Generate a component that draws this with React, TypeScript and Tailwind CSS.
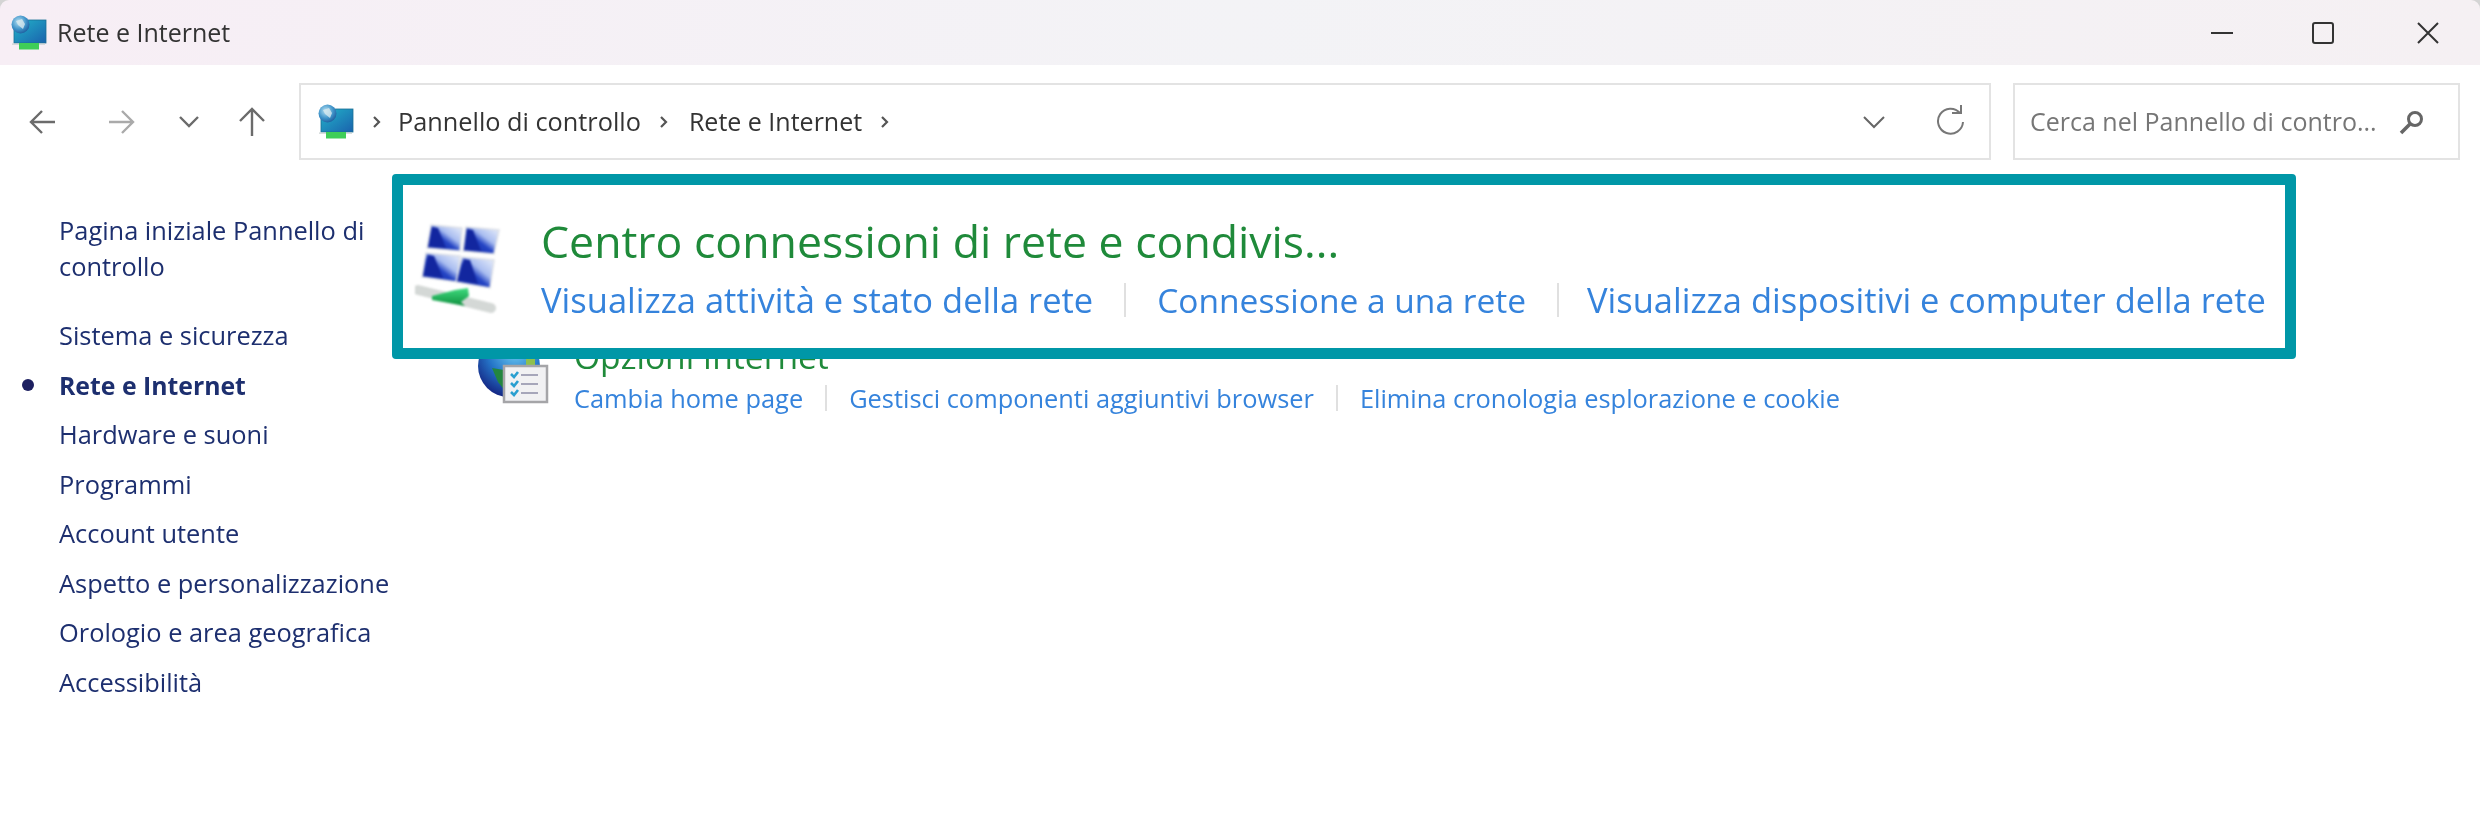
import React from "react";

const sideItems = [
    "Sistema e sicurezza",
    "Rete e Internet",
    "Hardware e suoni",
    "Programmi",
    "Account utente",
    "Aspetto e personalizzazione",
    "Orologio e area geografica",
    "Accessibilità",
];

const panes = [
    { frame: "M16 3L47 6L45 29L12 26Z", wedge: "M17 5L23 6L31 26L14 24Z" },
    { frame: "M51 5L84 8L79 32L48 29Z", wedge: "M52 7L58 8L66 29L50 27Z" },
    { frame: "M11 31L45 34L42 60L7 55Z", wedge: "M13 33L19 34L28 56L9 53Z" },
    { frame: "M47 35L79 38L75 66L41 60Z", wedge: "M49 37L55 38L63 62L43 58Z" },
];

const NetIcon: React.FC<{ id: string }> = ({ id }) => (
    <svg width="36" height="36" viewBox="0 0 36 36" className="shrink-0 blur-[0.4px]">
        <defs>
            <linearGradient id={`${id}-s`} x1="0" y1="0" x2="1" y2="1">
                <stop offset="0" stopColor="#22b3c9" />
                <stop offset="1" stopColor="#1a62ad" />
            </linearGradient>
            <radialGradient id={`${id}-g`} cx="0.4" cy="0.35" r="0.7">
                <stop offset="0" stopColor="#b4e0f2" />
                <stop offset="0.6" stopColor="#3f93c9" />
                <stop offset="1" stopColor="#1c5a9c" />
            </radialGradient>
        </defs>
        <rect x="3" y="5" width="32" height="23" fill={`url(#${id}-s)`} stroke="#1b6f94" strokeWidth="0.8" />
        <rect x="1" y="28.5" width="33" height="1.2" fill="#c8d0d0" />
        <rect x="8" y="28" width="20" height="6.5" fill="#3fce58" />
        <circle cx="9.5" cy="9.5" r="9" fill={`url(#${id}-g)`} />
        <path d="M5 6l6-2 3 5-2 5-5-4z" fill="#d8e8ee" opacity="0.8" />
    </svg>
);

const SharingIcon: React.FC = () => (
    <svg width="90" height="96" viewBox="0 0 90 96" className="mt-[11px] shrink-0 blur-[1.2px]">
        <defs>
            <linearGradient id="pane" x1="0" y1="1" x2="1" y2="0">
                <stop offset="0" stopColor="#12269f" />
                <stop offset="0.45" stopColor="#2444c4" />
                <stop offset="0.62" stopColor="#a9bdf0" />
                <stop offset="1" stopColor="#eef3fc" />
            </linearGradient>
            <linearGradient id="plug" x1="0" y1="0" x2="0" y2="1">
                <stop offset="0" stopColor="#3fdc80" />
                <stop offset="1" stopColor="#0f8f3e" />
            </linearGradient>
        </defs>
        {panes.map((p) => (
            <g key={p.frame}>
                <path d={p.frame} fill="url(#pane)" stroke="#dcdfe6" strokeWidth="1.5" />
                <path d={p.wedge} fill="#12269f" />
            </g>
        ))}
        <path d="M3 68l73 18" stroke="#d4d8d6" strokeWidth="10" strokeLinecap="round" />
        <path d="M17 74l23-6 13-2 1 8-8 6 4 4-33-6z" fill="url(#plug)" />
    </svg>
);

const OptionsIcon: React.FC = () => (
    <svg width="72" height="70" viewBox="0 0 72 70" className="mt-px shrink-0 blur-[0.6px]">
        <defs>
            <radialGradient id="globe" cx="0.6" cy="0.25" r="0.8">
                <stop offset="0" stopColor="#6fd0f5" />
                <stop offset="0.55" stopColor="#2575c8" />
                <stop offset="1" stopColor="#13207f" />
            </radialGradient>
        </defs>
        <circle cx="31" cy="32" r="31" fill="url(#globe)" />
        <path d="M14 34l12 2 6 8-4 14-8-10z" fill="#23863f" />
        <rect x="48" y="22" width="9" height="10" fill="#8ec04e" />
        <rect x="26" y="32" width="43" height="36" fill="#f1f1f3" stroke="#a5a5a8" strokeWidth="2.5" />
        <path d="M33 40l3 3 4-5M33 49l3 3 4-5M33 58l3 3 4-5" fill="none" stroke="#2a9fd0" strokeWidth="2.6" />
        <path d="M43 41h17M43 50h17M43 59h17" stroke="#8d8da8" strokeWidth="1.6" />
    </svg>
);

const Chevron: React.FC<{ className?: string }> = ({ className }) => (
    <svg width="10" height="14" viewBox="0 0 10 14" className={className}>
        <path d="M2 2l5 5-5 5" fill="none" stroke="#555" strokeWidth="2.2" />
    </svg>
);

const Sep: React.FC<{ className: string }> = ({ className }) => <span className={`block w-[2px] bg-[#e0e0e0] ${className}`} />;

export default function App(): React.ReactElement {
    return (
        <div className="relative h-[836px] w-[2480px] overflow-hidden whitespace-nowrap bg-white font-['Open_Sans',sans-serif] blur-[0.35px]">
            <div className="h-[65px] bg-[#d4d4d4]">
                <div className="flex h-[65px] items-center rounded-t-[9px] bg-gradient-to-r from-[#f7eef5] via-[#f3f3f6] to-[#f5f0f3] pl-[11px]">
                    <NetIcon id="a" />
                    <span className="ml-[10px] text-[25px] text-[#333]">Rete e Internet</span>
                    <div className="ml-auto flex items-center pr-[40px]">
                        <span className="h-[2px] w-[22px] bg-[#333]" />
                        <span className="ml-[79px] h-[22px] w-[22px] rounded-[3px] border-2 border-[#333]" />
                        <svg width="24" height="24" viewBox="0 0 24 24" className="ml-[82px]">
                            <path d="M2 2l20 20M22 2L2 22" stroke="#333" strokeWidth="2" />
                        </svg>
                    </div>
                </div>
            </div>

            <div className="flex h-[95px] items-start pt-[18px]">
                <div className="flex h-[77px] w-[299px] items-center text-[#6b6b6b]">
                    <svg width="28" height="28" viewBox="0 0 28 28" className="ml-[29px]">
                        <path d="M2 14h24M13 3L2 14l11 11" fill="none" stroke="currentColor" strokeWidth="2.4" />
                    </svg>
                    <svg width="28" height="28" viewBox="0 0 28 28" className="ml-[50px] text-[#aaa]">
                        <path d="M2 14h24M15 3l11 11-11 11" fill="none" stroke="currentColor" strokeWidth="2.4" />
                    </svg>
                    <svg width="22" height="14" viewBox="0 0 22 14" className="ml-[43px]">
                        <path d="M2 2l9 9 9-9" fill="none" stroke="currentColor" strokeWidth="2.4" />
                    </svg>
                    <svg width="28" height="30" viewBox="0 0 28 30" className="ml-[38px]">
                        <path d="M14 29V2M2 14L14 2l12 12" fill="none" stroke="currentColor" strokeWidth="2.4" />
                    </svg>
                </div>
                <div className="flex h-[77px] w-[1692px] items-center border-2 border-[#e3e3e3] pl-[17px] pr-[23px] text-[#333]">
                    <NetIcon id="b" />
                    <Chevron className="ml-[18px]" />
                    <span className="ml-[16px] text-[25.3px]">Pannello di controllo</span>
                    <Chevron className="ml-[18px]" />
                    <span className="ml-[20px] text-[25px]">Rete e Internet</span>
                    <Chevron className="ml-[18px]" />
                    <svg width="24" height="14" viewBox="0 0 24 14" className="ml-auto">
                        <path d="M2 2l10 10 10-10" fill="none" stroke="#666" strokeWidth="2" />
                    </svg>
                    <svg width="30" height="34" viewBox="0 0 30 34" className="ml-[50px]">
                        <path d="M24 8a12.5 12.5 0 1 0 3 9" fill="none" stroke="#777" strokeWidth="2" />
                        <path d="M16 8h9V0" fill="none" stroke="#777" strokeWidth="2" />
                    </svg>
                </div>
                <div className="ml-[22px] flex h-[77px] w-[447px] items-center border-2 border-[#e3e3e3] pl-[15px]">
                    <span className="text-[25px] text-[#767676]">Cerca nel Pannello di contro...</span>
                    <svg width="26" height="26" viewBox="0 0 26 26" className="ml-auto mr-[33px]">
                        <circle cx="16" cy="10" r="6.5" fill="none" stroke="#666" strokeWidth="3" />
                        <path d="M11 15l-9 9" stroke="#666" strokeWidth="3.5" />
                    </svg>
                </div>
            </div>

            <div className="flex">
                <div className="w-[478px] shrink-0 pl-[59px] pt-[52px] text-[25.4px] text-[#1d2f6f]">
                    <p className="w-[340px] whitespace-normal leading-[36px]">Pagina iniziale Pannello di controllo</p>
                    <ul className="mt-[27px] flex flex-col">
                        {sideItems.map((item) => {
                            const active = item === "Rete e Internet";
                            return (
                                <li key={item} className={`relative h-[49.5px] leading-[49.5px] ${active ? "text-[24.8px] font-bold" : ""}`}>
                                    {active && <span className="absolute left-[-37px] top-[18px] h-[12px] w-[12px] rounded-full bg-[#1d2060]" />}
                                    {item}
                                </li>
                            );
                        })}
                    </ul>
                </div>

                <div className="flex gap-[24px] pt-[173px]">
                    <OptionsIcon />
                    <div className="flex flex-col">
                        <span className="h-[46px] text-[33.6px] leading-[46px] text-[#1f8a3a]">Opzioni Internet</span>
                        <div className="flex items-center text-[25.4px] text-[#3583dc]">
                            <span>Cambia home page</span>
                            <Sep className="mx-[22px] h-[26px]" />
                            <span>Gestisci componenti aggiuntivi browser</span>
                            <Sep className="mx-[22px] h-[26px]" />
                            <span>Elimina cronologia esplorazione e cookie</span>
                        </div>
                    </div>
                </div>
            </div>

            {/* riquadro evidenziato sopra il contenuto */}
            <div className="absolute left-[392px] top-[174px] flex h-[185px] w-[1904px] rounded-[4px] border-[11px] border-[#0097a7] bg-white pl-[12px] pt-[26px]">
                <SharingIcon />
                <div className="ml-[36px] mt-px flex flex-col">
                    <span className="h-[63px] text-[44.6px] leading-[58px] text-[#1f8a3a]">Centro connessioni di rete e condivis...</span>
                    <div className="flex items-center text-[34.5px] leading-[50px] text-[#3583dc]">
                        <span>Visualizza attività e stato della rete</span>
                        <Sep className="mx-[31px] h-[34px]" />
                        <span className="text-[33.5px]">Connessione a una rete</span>
                        <Sep className="ml-[31px] mr-[28px] h-[34px]" />
                        <span>Visualizza dispositivi e computer della rete</span>
                    </div>
                </div>
            </div>
        </div>
    );
}
